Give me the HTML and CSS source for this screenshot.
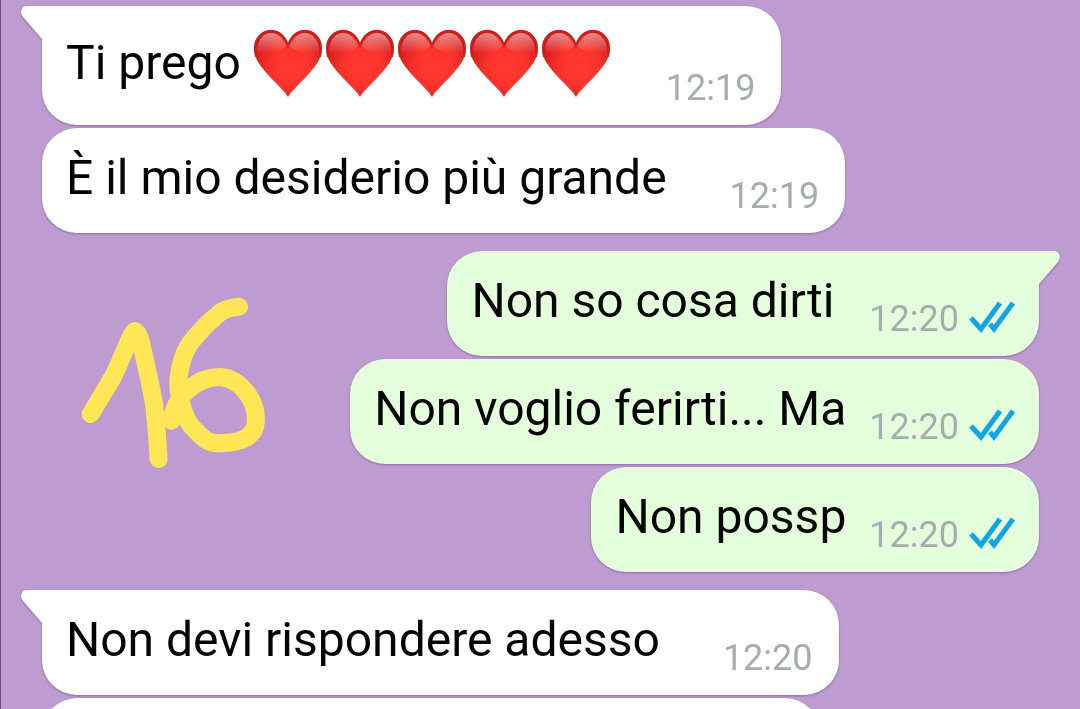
FILE: index.html
```html
<!DOCTYPE html>
<html lang="it">
<head>
    <meta charset="UTF-8">
    <meta name="viewport" content="width=device-width, initial-scale=1.0">
    <title>Chat</title>
    <link rel="stylesheet" href="styles.css">
</head>
<body>
    <!-- shared shapes -->
    <svg class="defs" aria-hidden="true">
        <defs>
            <radialGradient id="heart-fill" cx="0.54" cy="0.56" r="0.58">
                <stop offset="0" stop-color="#ff3a32"/>
                <stop offset="0.5" stop-color="#fc332c"/>
                <stop offset="1" stop-color="#d01a18"/>
            </radialGradient>
            <linearGradient id="heart-shine" x1="0" y1="0" x2="0" y2="1">
                <stop offset="0" stop-color="#fff" stop-opacity="0.5"/>
                <stop offset="1" stop-color="#fff" stop-opacity="0"/>
            </linearGradient>
            <symbol id="heart" viewBox="0 0 72 70">
                <path d="M35 69C33 65 27 59 18 50C8 39 1 31 1 20C1 9 9 2 18 2C26 2 32 8 35 16C38 8 44 2 52 2C61 2 69 9 69 20C69 31 62 39 52 50C43 59 37 65 35 69Z" fill="url(#heart-fill)"/>
                <path d="M3 29C0 12 9 3 18 3C26 3 32 9 35 17C38 9 44 3 52 3C61 3 70 12 67 29" fill="none" stroke="#c4211f" stroke-width="2"/>
                <path d="M4 24C4 11 11 5 18 5C25 5 30 10 33 18C27 25 14 28 4 24Z" fill="url(#heart-shine)"/>
                <path d="M37 18C40 10 45 5 52 5C59 5 66 11 66 24C56 28 43 25 37 18Z" fill="url(#heart-shine)"/>
            </symbol>
            <symbol id="ticks" viewBox="0 0 46 36">
                <path d="M2 17L12 28L31 2M21 23L25 28L44 2" fill="none" stroke="#12a5e6" stroke-width="5"/>
            </symbol>
            <symbol id="tail" viewBox="0 0 22 34">
                <path d="M22 0H6C1 0 -2 6 2 11L21 33H22Z" fill="currentColor"/>
            </symbol>
        </defs>
    </svg>

    <main class="chat">
        <div class="message in first emoji">
            <svg class="tail" aria-hidden="true"><use href="#tail"/></svg>
            <p class="text">Ti prego
                <span class="hearts" role="img" aria-label="cuori">
                    <svg class="heart"><use href="#heart"/></svg>
                    <svg class="heart"><use href="#heart"/></svg>
                    <svg class="heart"><use href="#heart"/></svg>
                    <svg class="heart"><use href="#heart"/></svg>
                    <svg class="heart"><use href="#heart"/></svg>
                </span>
            </p>
            <div class="meta"><time>12:19</time></div>
        </div>
        <div class="message in">
            <p class="text">È il mio desiderio più grande</p>
            <div class="meta"><time>12:19</time></div>
        </div>

        <div class="message out first">
            <svg class="tail" aria-hidden="true"><use href="#tail"/></svg>
            <p class="text short">Non so cosa dirti</p>
            <div class="meta"><time>12:20</time><svg class="ticks" role="img" aria-label="Letto"><use href="#ticks"/></svg></div>
        </div>
        <div class="message out">
            <p class="text">Non voglio ferirti... Ma</p>
            <div class="meta"><time>12:20</time><svg class="ticks" role="img" aria-label="Letto"><use href="#ticks"/></svg></div>
        </div>
        <div class="message out">
            <p class="text">Non possp</p>
            <div class="meta"><time>12:20</time><svg class="ticks" role="img" aria-label="Letto"><use href="#ticks"/></svg></div>
        </div>

        <div class="message in first">
            <svg class="tail" aria-hidden="true"><use href="#tail"/></svg>
            <p class="text">Non devi rispondere adesso</p>
            <div class="meta"><time>12:20</time></div>
        </div>
        <div class="message in next"></div>

        <!-- hand-drawn mark over the chat -->
        <svg class="scribble" viewBox="0 0 690 600" role="img" aria-label="16">
            <path d="M92 402L132 335L162 285L195 210Q218 153 225 153Q236 158 243 188L266 290L282 370L290 450L296 537"/>
            <path d="M537 80Q500 84 480 98Q430 138 390 190Q362 230 355 300Q354 345 368 385Q382 430 405 450Q435 484 460 489Q510 492 545 480Q584 464 587 430Q592 385 565 345Q530 294 480 291Q430 290 385 328Q345 362 334 422"/>
        </svg>
    </main>
</body>
</html>
```
FILE: styles.css
```css
* {
    box-sizing: border-box;
}

body {
    margin: 0;
    background-color: #be9bd0;
    font-family: Roboto, "Liberation Sans", sans-serif;
    color: #050505;
}

.defs {
    position: absolute;
    width: 0;
    height: 0;
}

.chat {
    position: relative;
    display: flex;
    flex-direction: column;
    gap: 3px;
    height: 100vh;
    padding: 6px 41px;
    border-left: 1px solid #67507a;
    overflow: hidden;
}

.message {
    position: relative;
    display: flex;
    flex-shrink: 0;
    align-items: flex-end;
    padding: 22px 24px 16px;
    border-radius: 35px;
    filter: drop-shadow(0 1px 1px rgba(70, 40, 90, 0.4));
}

.in {
    align-self: flex-start;
    gap: 63px;
    padding-right: 26px;
    background-color: #fff;
    color: #fff;
}

.out {
    align-self: flex-end;
    gap: 23px;
    background-color: #e4ffdb;
    color: #e4ffdb;
}

.first {
    margin-top: 15px;
}

.first:first-child {
    margin-top: 0;
}

.in.first {
    border-top-left-radius: 0;
}

.out.first {
    border-top-right-radius: 0;
}

.emoji {
    gap: 53px;
}

.tail {
    position: absolute;
    top: 0;
    left: -21px;
    width: 22px;
    height: 34px;
}

.out .tail {
    left: auto;
    right: -21px;
    transform: scaleX(-1);
}

.text {
    display: flex;
    align-items: center;
    gap: 12px;
    margin: 0;
    padding-bottom: 11px;
    font-size: 48px;
    line-height: 56px;
    color: #050505;
    white-space: nowrap;
}

.short {
    padding-right: 12px;
}

.hearts {
    display: flex;
}

.heart {
    width: 72px;
    height: 70px;
}

.meta {
    display: flex;
    align-items: center;
    gap: 10px;
    font-size: 36px;
    line-height: 42px;
    color: #a5adb0;
}

.ticks {
    width: 46px;
    height: 36px;
}

.next {
    width: 78%;
    height: 105px;
}

.scribble {
    position: absolute;
    top: 280px;
    left: 59px;
    width: 230px;
    height: 200px;
    fill: none;
    stroke: #ffe656;
    stroke-width: 54;
    stroke-linecap: round;
    stroke-linejoin: round;
}
```
